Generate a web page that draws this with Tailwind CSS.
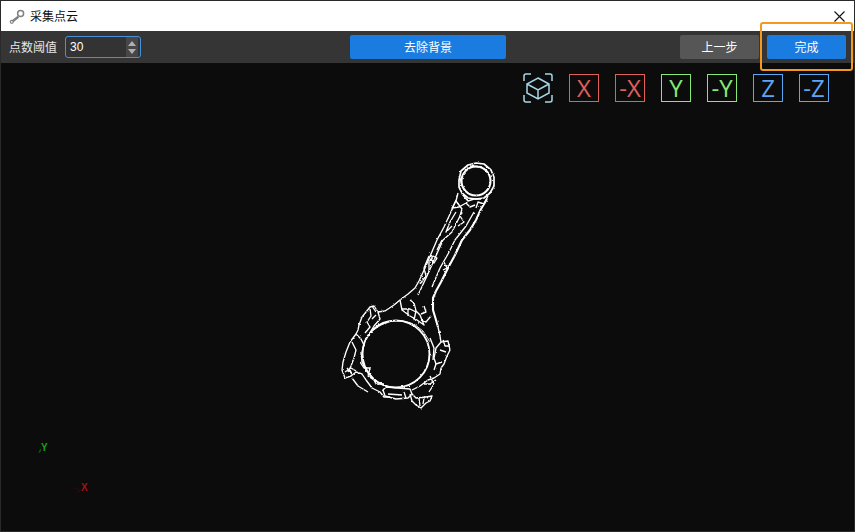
<!DOCTYPE html>
<html lang="zh">
<head>
<meta charset="utf-8">
<script src="https://cdn.jsdelivr.net/npm/@tailwindcss/browser@4"></script>
</head>
<body class="w-[855px] h-[532px] overflow-hidden bg-[#0c0c0c] font-['Noto_Sans_CJK_SC','Liberation_Sans',sans-serif]">
<div class="relative flex flex-col w-[855px] h-[532px] border border-[#2a2a2a]">
  <!-- title bar -->
  <div class="flex items-center h-[30px] bg-white pl-[8px] pr-[8px] shrink-0">
    <svg class="w-[17px] h-[17px]" viewBox="0 0 17 17" fill="none">
      <path d="M3.6 13.2 L9.4 8.8" stroke="#808080" stroke-width="2.4"/>
      <circle cx="11.6" cy="5.6" r="3" stroke="#808080" stroke-width="1.5"/>
      <circle cx="2.8" cy="13.8" r="1.5" stroke="#808080" stroke-width="1.2"/>
    </svg>
    <span class="ml-[4px] text-[12px] leading-none text-[#111]">采集点云</span>
    <svg class="ml-auto w-[13px] h-[13px]" viewBox="0 0 13 13" fill="none">
      <path d="M1.5 1.5 L11.5 11.5 M11.5 1.5 L1.5 11.5" stroke="#111" stroke-width="1.1"/>
    </svg>
  </div>
  <!-- toolbar -->
  <div class="flex items-center h-[32px] bg-[#353535] shrink-0 pl-[8px] pr-[8px]">
    <span class="text-[12px] leading-none text-[#e8e8e8]">点数阈值</span>
    <div class="ml-[8px] flex items-center w-[76px] h-[22px] rounded-[3px] border border-[#4a90d9] bg-[#333333] pr-[2px]">
      <span class="pl-[4px] text-[12px] leading-none text-white font-['Liberation_Sans',sans-serif]">30</span>
      <div class="ml-auto w-[12px] h-[20px] bg-[#474747] flex flex-col items-center justify-center gap-[3px]">
        <svg class="w-[8px] h-[5px]" viewBox="0 0 8 5"><path d="M4 0 L8 5 L0 5 Z" fill="#b0b0b0"/></svg>
        <svg class="w-[8px] h-[5px]" viewBox="0 0 8 5"><path d="M0 0 L8 0 L4 5 Z" fill="#b0b0b0"/></svg>
      </div>
    </div>
    <button class="ml-[209px] w-[156px] h-[24px] rounded-[2px] bg-[#1a7be0] text-[12px] leading-none text-white">去除背景</button>
    <button class="ml-auto w-[79px] h-[24px] rounded-[2px] bg-[#565656] text-[12px] leading-none text-white">上一步</button>
    <button class="ml-[8px] w-[79px] h-[24px] rounded-[2px] bg-[#1a7be0] text-[12px] leading-none text-white">完成</button>
  </div>
  <!-- viewport -->
  <div class="relative flex-1 bg-[#0c0c0c]">
    <svg class="absolute left-[-1px] top-[-63px] w-[855px] h-[532px]" viewBox="0 0 855 532" fill="none">
      <defs>
        <filter id="rough" x="300" y="140" width="220" height="290" filterUnits="userSpaceOnUse">
          <feTurbulence type="fractalNoise" baseFrequency="0.45" numOctaves="2" seed="4" result="n"/>
          <feDisplacementMap in="SourceGraphic" in2="n" scale="2.2" xChannelSelector="R" yChannelSelector="G"/>
        </filter>
      </defs>
      <g stroke="#ffffff" stroke-width="1.35" stroke-linejoin="round" filter="url(#rough)">
        <!-- small end -->
        <circle cx="476" cy="181" r="14.5" stroke-width="2.1"/>
        <path d="M459 180 L461 171 L468 165 L476 163 L484 164 L491 170 L494 177 L494 186 L490 193 L484 198 L476 199 L468 198 L462 193 L459 187 Z" stroke-width="1.7"/>
        <path d="M470 166 L482 167 M460 178 L462 186"/>
        <!-- neck -->
        <path d="M458 193 L456 201 L452 208 L459 207 L466 203 M462 194 L468 201 L474 199 L481 199 M488 196 L484 204 L478 202 L476 208 M456 201 L462 209 L460 216 L464 222 L458 226 M466 203 L470 207 L475 205"/>
        <!-- shank -->
        <path d="M456 200 L450 214 L444 227 L437 240 L431 254 L425 268 L419 281 L415 288 L408 294 L400 300 L394 305"/>
        <path d="M487 199 L481 209 L476 220 L470 230 L462 240 L455 255 L448 268 L441 282 L436 291 L433 298 L433 310 L436 320 L438 327" stroke-width="2.1"/>
        <path d="M474 212 L466 226 L455 240 L448 254 L440 268 L432 287"/>
        <path d="M462 212 L452 232 L443 240 L435 258 L427 276 L418 295"/>
        <path d="M456 212 L450 222 L446 232 L452 226 M442 240 L437 250 M431 259 L434 263 L437 258 L433 256 L429 262 L429 272 M444 262 L447 268 L443 270"/>
        <path d="M429 256 L424 268 L426 276 L420 284"/>
        <!-- big end bore -->
        <circle cx="396" cy="354" r="33.5" stroke-width="1.9"/>
        <path d="M365 339 L372 331 L381 325 L392 321 L403 321 L414 324 L423 331 L430 342" stroke-width="0.9"/>
        <!-- upper shoulder -->
        <path d="M394 305 L385 311 L378 312 L374 306 L370 307 L366 312 L362 317 L359 325 L358 330 L356 334 L361 339 L364 345 L362 352"/>
        <path d="M370 309 L371 316 L367 322 L370 327 L365 333 M372 319 L376 315 M378 312 L380 319 L374 326 L368 336 M372 306 L376 312"/>
        <path d="M400 300 L402 310 L410 316 L417 320 L424 325 L420 315 L416 311 L414 303 L410 300 M402 309 L410 309 L416 312 M421 314 L426 312 L424 306 M408 316 L408 308 M414 320 L416 311 M421 320 L426 322 L431 316"/>
        <!-- left lobe -->
        <path d="M356 334 L350 342 L346 352 L343 362 L342 370 L345 378 L351 376 L356 372 L362 374 L366 380 L372 388 L380 392 L384 397 L390 397"/>
        <path d="M352 342 L356 350 L354 358 L351 366 L348 372 M345 372 L351 368 L356 371 M360 362 L364 368 L370 368 L368 376 L374 380 L376 384 L384 384"/>
        <path d="M361 352 L362 362 L366 370 L376 382 M352 378 L358 386 L368 392 M347 368 L352 374 L350 370"/>
        <!-- bottom cap -->
        <path d="M383 390 L385 396 L396 399 L408 398 L412 394 L410 389 L398 388 L386 387 Z M388 394 L402 395 M404 392 L406 398"/>
        <path d="M410 394 L412 401 L416 405 L421 408 L426 403 L430 401 L432 396 L426 397 L416 398 L412 394 M419 398 L420 406 M424 398 L423 404"/>
        <path d="M412 390 L420 386 L428 380 L434 378 L440 374 L441 368 M424 384 L430 384 L436 380 M430 376 L434 384 L429 392"/>
        <!-- right lobe -->
        <path d="M438 327 L440 336 L441 342 L448 341 L450 350 L447 356 L444 364 L441 368 M441 342 L436 348 L434 358 L436 364 L434 370 M440 350 L446 352 M436 364 L442 362 M443 340 L445 346 L450 346"/>
        <path d="M430 338 L434 348 L433 360"/>
      </g>
      <!-- axes -->
      <g font-size="10" font-weight="700" font-family="Liberation Sans, sans-serif">
        <text x="41" y="451" fill="#0fa70f">Y</text>
        <path d="M40 450 L39 453 M41 449 L40 452" stroke="#0c5a0c" stroke-width="1"/>
        <text x="81" y="491" fill="#a80f0f">X</text>
        <path d="M74 488 L81 490 M76 493 L81 490" stroke="#2e0a0a" stroke-width="1"/>
      </g>
    </svg>
    <!-- view cube & axis buttons -->
    <div class="relative flex justify-end gap-[16px] pr-[25px] pt-[11px]">
      <svg class="w-[30px] h-[30px] mt-[-1px]" viewBox="0 0 30 30" fill="none" stroke="#a6d6e6" stroke-width="1.5">
        <path d="M1 8 V3 Q1 1 3 1 H8 M22 1 H27 Q29 1 29 3 V8 M29 22 V27 Q29 29 27 29 H22 M8 29 H3 Q1 29 1 27 V22"/>
        <path d="M15 5 L26 11 V20 L15 26 L4 20 V11 Z M4 11 L15 17 L26 11 M15 17 V26"/>
      </svg>
      <div class="flex items-center justify-center w-[30px] h-[28px] border border-[#e0605a] text-[#e0605a] text-[24px] leading-none font-normal font-['Open_Sans',sans-serif]">X</div>
      <div class="flex items-center justify-center w-[30px] h-[28px] border border-[#e0605a] text-[#e0605a] text-[24px] leading-none font-normal font-['Open_Sans',sans-serif]">-X</div>
      <div class="flex items-center justify-center w-[30px] h-[28px] border border-[#84ea74] text-[#84ea74] text-[24px] leading-none font-normal font-['Open_Sans',sans-serif]">Y</div>
      <div class="flex items-center justify-center w-[30px] h-[28px] border border-[#84ea74] text-[#84ea74] text-[24px] leading-none font-normal font-['Open_Sans',sans-serif]">-Y</div>
      <div class="flex items-center justify-center w-[30px] h-[28px] border border-[#5ca6f5] text-[#5ca6f5] text-[24px] leading-none font-normal font-['Open_Sans',sans-serif]">Z</div>
      <div class="flex items-center justify-center w-[30px] h-[28px] border border-[#5ca6f5] text-[#5ca6f5] text-[24px] leading-none font-normal font-['Open_Sans',sans-serif]">-Z</div>
    </div>
  </div>
  <!-- orange highlight -->
  <div class="absolute z-10 left-[759px] top-[21px] w-[93px] h-[49px] rounded-[3px] border-2 border-[#f39a1e]"></div>
</div>
</body>
</html>
